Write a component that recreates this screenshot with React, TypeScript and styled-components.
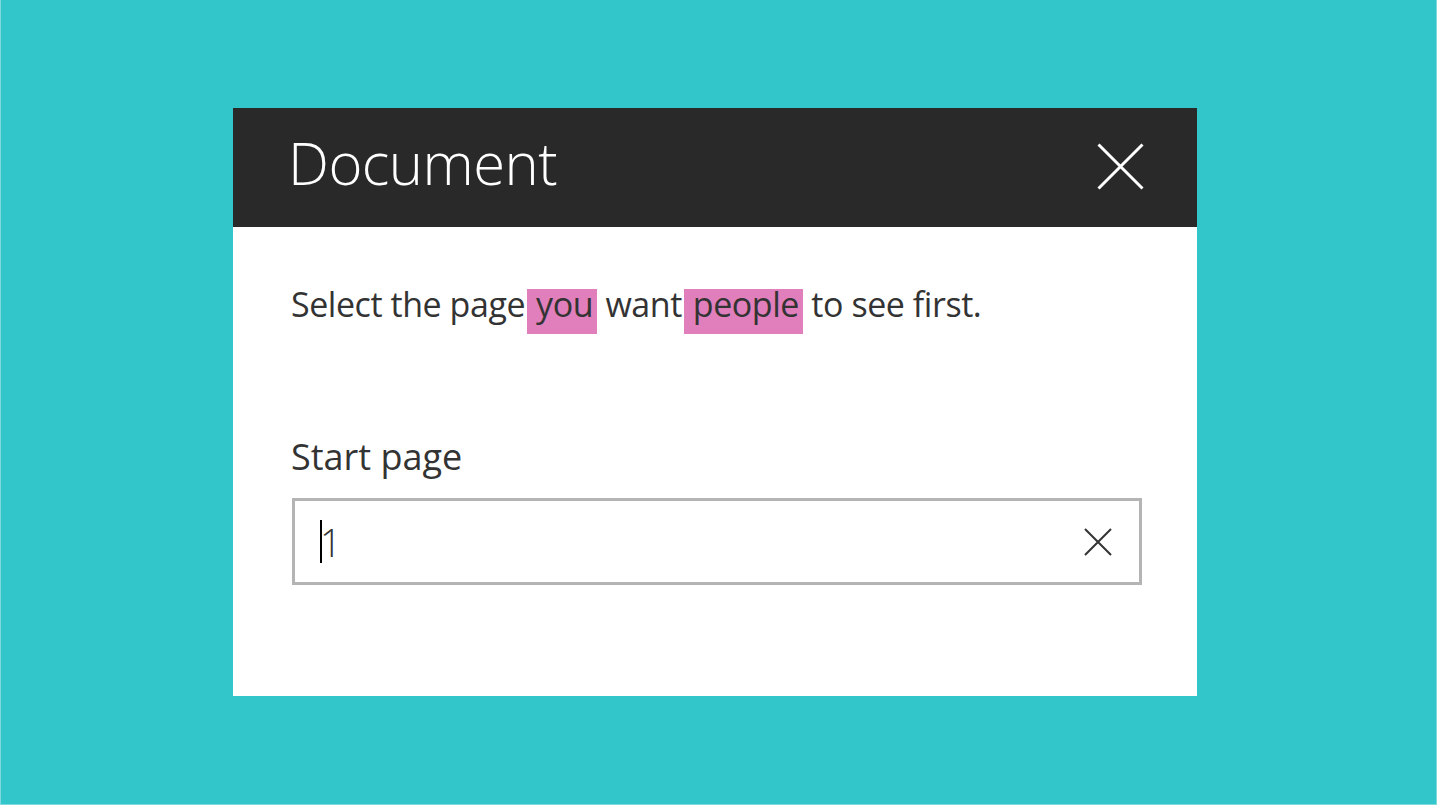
import React from "react";
import styled, { createGlobalStyle } from "styled-components";

const Global = createGlobalStyle`
  html, body { margin: 0; padding: 0; }
  body {
    background: #32c6cb;
    font-family: "Open Sans", "Noto Sans", sans-serif;
  }
`;

const Page = styled.div`
  width: 1437px;
  height: 805px;
  box-sizing: border-box;
  padding: 108px 0 0 232px;
  background: #32c6cb;
  border: 1px solid #7fd9dd;
  border-top: 0;
`;

const Dialog = styled.div`
  width: 964px;
  height: 588px;
  background: #ffffff;
  display: flex;
  flex-direction: column;
`;

const Header = styled.div`
  height: 119px;
  background: #292929;
  display: flex;
  align-items: center;
  justify-content: space-between;
  padding: 0 53px 0 55px;
  box-sizing: border-box;
`;

const Title = styled.h1`
  margin: 0 0 9px 0;
  color: #ffffff;
  font-weight: 300;
  font-size: 58px;
  line-height: 1;
  letter-spacing: -0.55px;
`;

const IconButton = styled.button<{ $lift?: number }>`
  border: 0;
  padding: 0;
  background: transparent;
  display: flex;
  cursor: pointer;
  margin-bottom: ${(p) => p.$lift ?? 0}px;
`;

const Body = styled.div`
  padding: 62px 55px 0 58px;
  display: flex;
  flex-direction: column;
  color: #333333;
`;

const Sentence = styled.p`
  margin: 0;
  font-size: 34px;
  line-height: 30px;
  font-weight: 400;
  letter-spacing: -0.45px;
`;

const Mark = styled.span`
  display: inline-block;
  background: #e07fbb;
  line-height: 30px;
  margin-left: 2px;
  padding: 0 4px 15px 9px;
`;

const Label = styled.label`
  margin-top: 108px;
  font-size: 36px;
  line-height: 30px;
  letter-spacing: 0;
`;

const Field = styled.div`
  margin-top: 26px;
  margin-left: 1px;
  width: 850px;
  height: 87px;
  box-sizing: border-box;
  border: 3px solid #b4b4b4;
  display: flex;
  align-items: center;
  padding: 0 27px 0 25px;
`;

const Value = styled.div`
  flex: 1;
  display: flex;
  align-items: center;
  font-size: 38px;
  font-weight: 300;
  color: #333;
`;

const Caret = styled.span`
  width: 2px;
  height: 43px;
  background: #000;
  margin-right: -2px;
`;

export default function App() {
  return (
    <>
      <Global />
      <Page>
        <Dialog>
          <Header>
            <Title>Document</Title>
            <IconButton aria-label="Close" $lift={3}>
              <svg width="47" height="47" viewBox="0 0 47 47">
                <path d="M1.5 1.5 L45.5 45.5 M45.5 1.5 L1.5 45.5" stroke="#fff" strokeWidth="3" fill="none" />
              </svg>
            </IconButton>
          </Header>
          <Body>
            <Sentence>
              Select the page<Mark>you</Mark> want<Mark>people</Mark> to see first.
            </Sentence>
            <Label>Start page</Label>
            <Field>
              <Value>
                <Caret />
                1
              </Value>
              <IconButton aria-label="Clear">
                <svg width="28" height="28" viewBox="0 0 28 28">
                  <path d="M1 1 L27 27 M27 1 L1 27" stroke="#333" strokeWidth="2" fill="none" />
                </svg>
              </IconButton>
            </Field>
          </Body>
        </Dialog>
      </Page>
    </>
  );
}
